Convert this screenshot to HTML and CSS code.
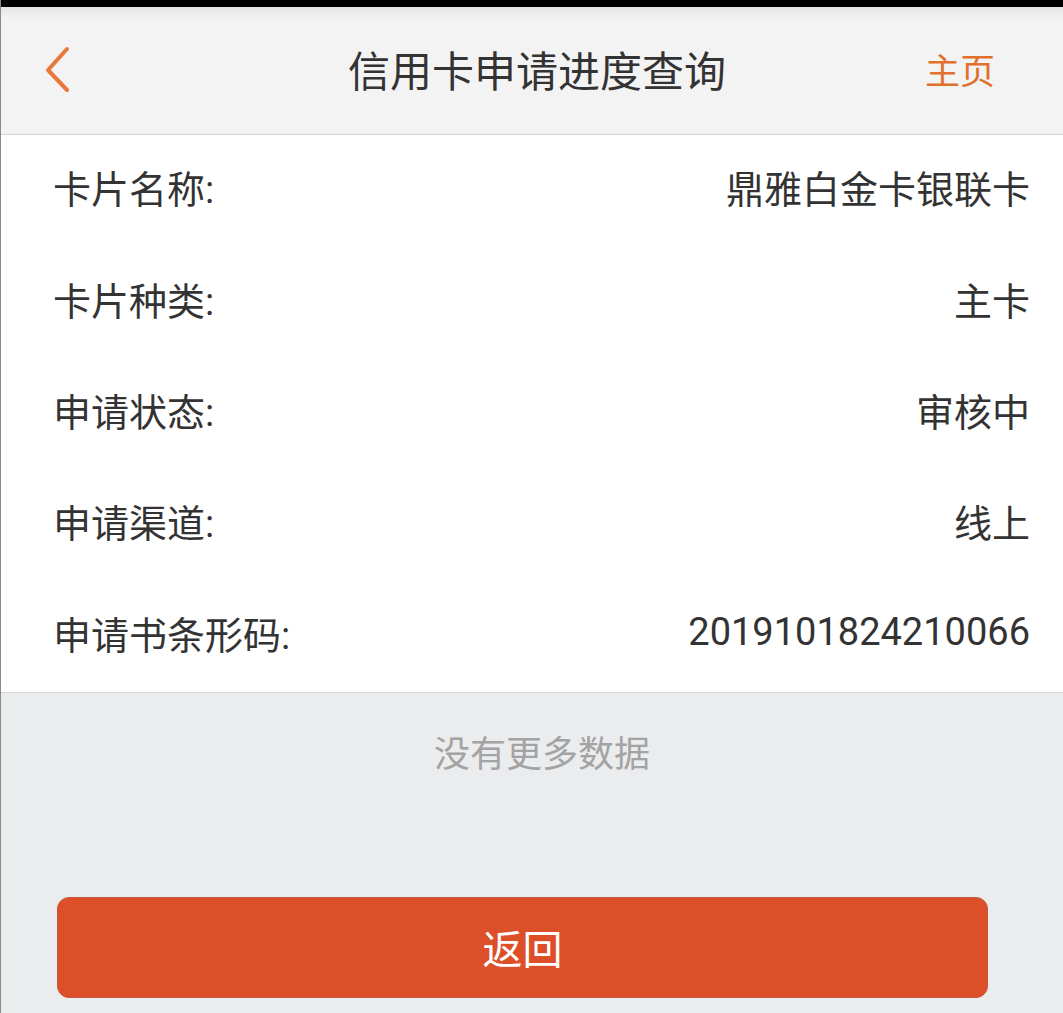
FILE: index.html
```html
<!DOCTYPE html>
<html lang="zh-CN">
<head>
    <meta charset="utf-8">
    <title>信用卡申请进度查询</title>
    <link rel="stylesheet" href="styles.css">
</head>
<body>
    <div class="page">
        <div class="status-bar"></div>
        <div class="header">
            <a class="back" href="#">
                <svg width="40" height="50" viewBox="0 0 40 50">
                    <polyline points="30,6 11,27 30,47" fill="none" stroke="#e9773a" stroke-width="4" stroke-linecap="round" stroke-linejoin="round"/>
                </svg>
            </a>
            <div class="title">信用卡申请进度查询</div>
            <a class="home" href="#">主页</a>
        </div>

        <div class="detail-list">
            <div class="row"><span class="label">卡片名称:</span><span class="value">鼎雅白金卡银联卡</span></div>
            <div class="row"><span class="label">卡片种类:</span><span class="value">主卡</span></div>
            <div class="row"><span class="label">申请状态:</span><span class="value">审核中</span></div>
            <div class="row"><span class="label">申请渠道:</span><span class="value">线上</span></div>
            <div class="row"><span class="label">申请书条形码:</span><span class="value">2019101824210066</span></div>
        </div>

        <p class="no-more">没有更多数据</p>

        <button class="return-button">返回</button>
    </div>
</body>
</html>
```

FILE: styles.css
```css
body {
    margin: 0;
    font-family: Roboto, "Noto Sans CJK SC", sans-serif;
    background-color: #ebecee;
    color: #333;
}

.page {
    border-left: 1px solid #8a8a8a;
    min-height: 1013px;
    box-sizing: border-box;
}

.status-bar {
    height: 7px;
    background-color: #000;
}

.header {
    height: 127px;
    display: flex;
    align-items: center;
    justify-content: space-between;
    background: linear-gradient(#e6e6e6, #f3f3f3 12px);
    border-bottom: 1px solid #d4d4d4;
    padding: 0 68px 0 36px;
}

.back {
    display: flex;
    width: 40px;
    height: 50px;
    margin-top: -5px;
}

.title {
    font-size: 42px;
    color: #333;
    margin-left: 72px;
    margin-top: -4px;
}

.home {
    font-size: 35px;
    color: #e0702c;
    text-decoration: none;
    margin-top: -4px;
}

.detail-list {
    background-color: #fff;
    border-bottom: 1px solid #d8d8d8;
}

.row {
    height: 111.4px;
    display: flex;
    align-items: center;
    justify-content: space-between;
    padding: 0 33px 8px 52px;
    font-size: 38px;
    box-sizing: border-box;
}

.no-more {
    margin: 0;
    padding: 38px 0 0 20px;
    line-height: 48px;
    text-align: center;
    font-size: 36px;
    color: #a3a3a3;
}

.return-button {
    display: block;
    width: 931px;
    height: 101px;
    margin: 118px 0 0 56px;
    background-color: #dc4f29;
    border: 1px solid #c4583a;
    border-radius: 12px;
    color: #fff;
    font-family: Roboto, "Noto Sans CJK SC", sans-serif;
    font-size: 40px;
    cursor: pointer;
}
```
